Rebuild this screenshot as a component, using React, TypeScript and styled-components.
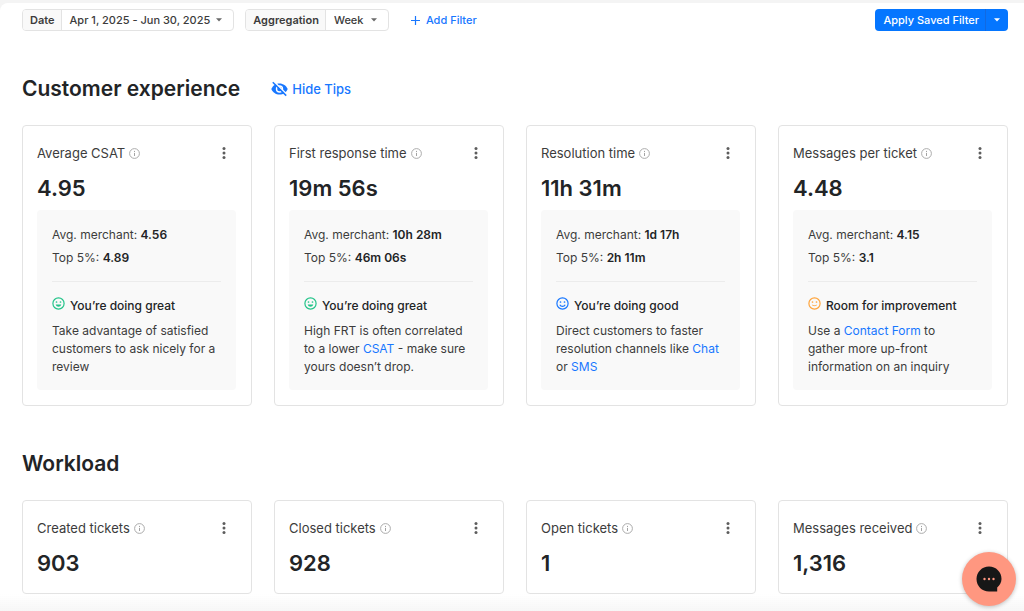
import React from "react";
import styled, { createGlobalStyle } from "styled-components";

const GlobalStyle = createGlobalStyle`
  *, *::before, *::after { box-sizing: border-box; }
  html { background: #f4f4f4; }
  body {
    margin: 0;
    font-family: Inter, "Liberation Sans", sans-serif;
    font-size: 13px;
    line-height: 18px;
    color: #3c3c3c;
  }
  button, select { font: inherit; color: inherit; }
`;

const Page = styled.main`
  margin-top: 3px;
  min-height: calc(100vh - 3px);
  padding: 6px 16px 18px 22px;
  background: #fff;
  border-top-left-radius: 8px;
`;

const Toolbar = styled.div`
  display: flex;
  align-items: center;
  gap: 11px;
  font-size: 11px;
  font-weight: 500;
  line-height: 20px;
`;

const FilterGroup = styled.div`
  display: flex;
  height: 22px;
  border: 1px solid #e3e3e3;
  border-radius: 4px;
  background: #fff;
  overflow: hidden;
`;

const FilterName = styled.label`
  padding: 0 6px 0 7px;
  border-right: 1px solid #e3e3e3;
  background: #f9f9f9;
  font-weight: 600;
`;

const RangeButton = styled.button`
  display: flex;
  align-items: center;
  gap: 6px;
  padding: 0 11px 0 8px;
  border: 0;
  background: none;
  cursor: pointer;
`;

const SelectWrap = styled.div`
  position: relative;
  display: flex;
  align-items: center;
`;

const Select = styled.select`
  width: 62px;
  height: 20px;
  padding: 0 0 0 8px;
  border: 0;
  background: none;
  appearance: none;
  cursor: pointer;
`;

const SelectCaret = styled.span`
  position: absolute;
  right: 11px;
  display: flex;
  pointer-events: none;
`;

const TextButton = styled.button`
  display: flex;
  align-items: center;
  gap: 6px;
  margin-left: 11px;
  padding: 0;
  border: 0;
  background: none;
  color: #1877ff;
  cursor: pointer;
`;

const TipsButton = styled(TextButton)`
  gap: 4px;
  margin-left: 31px;
  font-weight: 500;
`;

const SplitButton = styled.div`
  display: flex;
  height: 22px;
  margin-left: auto;
  border-radius: 4px;
  background: #0576ff;
  color: #fff;
  overflow: hidden;
`;

const SplitPart = styled.button<{ $caret?: boolean }>`
  display: flex;
  align-items: center;
  padding: ${(p) => (p.$caret ? "0 8px" : "0 6px 0 8px")};
  border: 0;
  border-left: ${(p) => (p.$caret ? "1px solid #1269e0" : "0")};
  background: none;
  cursor: pointer;
`;

const SectionHead = styled.div`
  display: flex;
  align-items: center;
  margin: 44px 0 22px;
`;

const Heading = styled.h2`
  margin: 0;
  color: #222426;
  font-size: 21px;
  font-weight: 600;
  line-height: 28px;
`;

const Grid = styled.div`
  display: grid;
  grid-template-columns: repeat(4, minmax(0, 1fr));
  gap: 22px;
`;

const Card = styled.article`
  padding: 15px 15px 15px 14px;
  border: 1px solid #e3e3e3;
  border-radius: 4px;
`;

const CardHead = styled.header`
  display: flex;
  align-items: center;
  height: 24px;
`;

const CardTitle = styled.h3`
  margin: 0 4px 0 0;
  font-size: 13px;
  font-weight: 400;
`;

const MenuButton = styled.button`
  display: flex;
  align-items: center;
  justify-content: center;
  width: 24px;
  height: 24px;
  margin-left: auto;
  padding: 0;
  border: 0;
  background: none;
  cursor: pointer;
`;

const Value = styled.p`
  margin: 8px 0 0;
  color: #222426;
  font-size: 22px;
  font-weight: 600;
  line-height: 30px;
`;

const Tip = styled.div`
  margin-top: 7px;
  padding: 16px 15px 14px;
  border-radius: 4px;
  background: #f9f9f9;
  font-size: 12px;
`;

const Benchmark = styled.p`
  margin: 0 0 5px;

  strong {
    color: #222426;
    font-weight: 600;
  }
`;

const Divider = styled.hr`
  margin: 14px 0 15px;
  border: 0;
  border-top: 1px solid #ececec;
`;

const Status = styled.h4`
  display: flex;
  align-items: flex-start;
  gap: 5px;
  margin: 0 0 7px;
  color: #222426;
  font-size: 12px;
  font-weight: 500;
  white-space: nowrap;
`;

const Advice = styled.p`
  margin: 0;
`;

const Link = styled.a`
  color: #1877ff;
  text-decoration: none;
`;

const BottomFade = styled.div`
  position: fixed;
  inset: auto 0 0;
  height: 17px;
  background: linear-gradient(rgba(247, 247, 247, 0), #f7f7f7);
  pointer-events: none;
`;

const ChatButton = styled.button`
  position: fixed;
  right: 8px;
  bottom: 5px;
  display: flex;
  align-items: center;
  justify-content: center;
  width: 54px;
  height: 54px;
  padding: 0;
  border: 0;
  border-radius: 50%;
  background: #ff9780;
  box-shadow: 0 1px 4px rgba(0, 0, 0, 0.25);
  cursor: pointer;
`;

const Caret = ({ color = "#6a6a6a" }: { color?: string }) => (
  <svg width="6" height="4" viewBox="0 0 6 4" aria-hidden="true">
    <path d="M0 .3h6L3 3.6z" fill={color} />
  </svg>
);

const PlusIcon = () => (
  <svg width="9" height="9" viewBox="0 0 9 9" aria-hidden="true">
    <path d="M4.5 0v9M0 4.5h9" stroke="currentColor" strokeWidth="1.2" />
  </svg>
);

const HiddenEyeIcon = () => (
  <svg width="17" height="16" viewBox="0 0 17 16" aria-hidden="true">
    <path
      d="M8.5 2.4C12.2 2.4 15.3 4.6 16.7 8C15.3 11.4 12.2 13.6 8.5 13.6S1.7 11.4.3 8C1.7 4.6 4.8 2.4 8.5 2.4z"
      fill="currentColor"
    />
    <circle cx="8.5" cy="8" r="3.7" fill="#fff" />
    <circle cx="8.5" cy="8" r="2.3" fill="currentColor" />
    <path d="M3 .6L16.2 13.8" stroke="#fff" strokeWidth="1.5" />
    <path d="M1.8 1.2L15.2 14.6" stroke="currentColor" strokeWidth="1.5" />
  </svg>
);

const InfoIcon = () => (
  <svg width="11" height="11" viewBox="0 0 11 11" aria-hidden="true">
    <circle cx="5.5" cy="5.5" r="4.9" fill="none" stroke="#a3a3a3" strokeWidth=".9" />
    <path d="M5.5 4.9v3.1M5.5 2.9v1.1" stroke="#a3a3a3" strokeWidth="1" />
  </svg>
);

const DotsIcon = () => (
  <svg width="4" height="12" viewBox="0 0 4 12" fill="#5d5d5d" aria-hidden="true">
    <circle cx="2" cy="1.5" r="1.5" />
    <circle cx="2" cy="6" r="1.5" />
    <circle cx="2" cy="10.5" r="1.5" />
  </svg>
);

type Mood = "great" | "good" | "fair";

const moods: Record<Mood, { color: string; label: string; mouth: React.ReactNode }> = {
  great: {
    color: "#24c48a",
    label: "You’re doing great",
    mouth: <path d="M3.7 7.5h5.6C8.8 9.1 7.8 9.7 6.5 9.7S4.2 9.1 3.7 7.5z" fill="currentColor" />,
  },
  good: {
    color: "#1877ff",
    label: "You’re doing good",
    mouth: (
      <path d="M3.8 7.7C4.3 8.8 5.3 9.4 6.5 9.4S8.7 8.8 9.2 7.7" fill="none" stroke="currentColor" strokeWidth="1.1" />
    ),
  },
  fair: {
    color: "#ffa53d",
    label: "Room for improvement",
    mouth: <path d="M4.3 8.1C5.5 8.8 7.5 8.8 8.7 8.1" fill="none" stroke="currentColor" strokeWidth="1" />,
  },
};

const Face = ({ mood }: { mood: Mood }) => (
  <svg width="13" height="13" viewBox="0 0 13 13" color={moods[mood].color} aria-hidden="true">
    <circle cx="6.5" cy="6.5" r="5.6" fill="none" stroke="currentColor" strokeWidth="1.2" />
    <circle cx="4.5" cy="5" r=".85" fill="currentColor" />
    <circle cx="8.5" cy="5" r=".85" fill="currentColor" />
    {moods[mood].mouth}
  </svg>
);

const ChatIcon = () => (
  <svg width="26" height="26" viewBox="0 0 26 26" aria-hidden="true">
    <path
      d="M13 .5C20 .5 25.5 6 25.5 13C25.5 16.4 23.7 19.3 21.2 21.5V25.5H13C6 25.5.5 20 .5 13S6 .5 13 .5z"
      fill="#171717"
    />
    <g fill="#ff9780">
      <circle cx="8.5" cy="13" r="1.2" />
      <circle cx="13" cy="13" r="1.2" />
      <circle cx="17.5" cy="13" r="1.2" />
    </g>
  </svg>
);

interface Metric {
  title: string;
  value: string;
  tip?: { average: string; top: string; mood: Mood; advice: React.ReactNode };
}

const experience: Metric[] = [
  {
    title: "Average CSAT",
    value: "4.95",
    tip: {
      average: "4.56",
      top: "4.89",
      mood: "great",
      advice: "Take advantage of satisfied customers to ask nicely for a review",
    },
  },
  {
    title: "First response time",
    value: "19m 56s",
    tip: {
      average: "10h 28m",
      top: "46m 06s",
      mood: "great",
      advice: (
        <>
          High FRT is often correlated to a lower <Link href="#csat">CSAT</Link> - make sure yours doesn’t drop.
        </>
      ),
    },
  },
  {
    title: "Resolution time",
    value: "11h 31m",
    tip: {
      average: "1d 17h",
      top: "2h 11m",
      mood: "good",
      advice: (
        <>
          Direct customers to faster resolution channels like <Link href="#chat">Chat</Link> or{" "}
          <Link href="#sms">SMS</Link>
        </>
      ),
    },
  },
  {
    title: "Messages per ticket",
    value: "4.48",
    tip: {
      average: "4.15",
      top: "3.1",
      mood: "fair",
      advice: (
        <>
          Use a <Link href="#contact-form">Contact Form</Link> to
          <br />
          gather more up-front information on an inquiry
        </>
      ),
    },
  },
];

const workload: Metric[] = [
  { title: "Created tickets", value: "903" },
  { title: "Closed tickets", value: "928" },
  { title: "Open tickets", value: "1" },
  { title: "Messages received", value: "1,316" },
];

const MetricCard = ({ title, value, tip }: Metric) => (
  <Card>
    <CardHead>
      <CardTitle>{title}</CardTitle>
      <InfoIcon />
      <MenuButton type="button" aria-label={`${title} options`}>
        <DotsIcon />
      </MenuButton>
    </CardHead>
    <Value>{value}</Value>
    {tip && (
      <Tip>
        <Benchmark>
          Avg. merchant: <strong>{tip.average}</strong>
        </Benchmark>
        <Benchmark>
          Top 5%: <strong>{tip.top}</strong>
        </Benchmark>
        <Divider />
        <Status>
          <Face mood={tip.mood} />
          {moods[tip.mood].label}
        </Status>
        <Advice>{tip.advice}</Advice>
      </Tip>
    )}
  </Card>
);

export default function App() {
  return (
    <>
      <GlobalStyle />
      <Page>
        <Toolbar>
          <FilterGroup>
            <FilterName htmlFor="date-range">Date</FilterName>
            <RangeButton id="date-range" type="button" aria-haspopup="dialog">
              Apr 1, 2025 - Jun 30, 2025
              <Caret />
            </RangeButton>
          </FilterGroup>
          <FilterGroup>
            <FilterName htmlFor="aggregation">Aggregation</FilterName>
            <SelectWrap>
              <Select id="aggregation" defaultValue="Week">
                <option>Day</option>
                <option>Week</option>
                <option>Month</option>
              </Select>
              <SelectCaret>
                <Caret />
              </SelectCaret>
            </SelectWrap>
          </FilterGroup>
          <TextButton type="button">
            <PlusIcon />
            Add Filter
          </TextButton>
          <SplitButton>
            <SplitPart type="button">Apply Saved Filter</SplitPart>
            <SplitPart type="button" $caret aria-label="Choose a saved filter">
              <Caret color="#fff" />
            </SplitPart>
          </SplitButton>
        </Toolbar>

        <section>
          <SectionHead>
            <Heading>Customer experience</Heading>
            <TipsButton type="button">
              <HiddenEyeIcon />
              Hide Tips
            </TipsButton>
          </SectionHead>
          <Grid>
            {experience.map((metric) => (
              <MetricCard key={metric.title} {...metric} />
            ))}
          </Grid>
        </section>

        <section>
          <SectionHead>
            <Heading>Workload</Heading>
          </SectionHead>
          <Grid>
            {workload.map((metric) => (
              <MetricCard key={metric.title} {...metric} />
            ))}
          </Grid>
        </section>
      </Page>
      <BottomFade />
      <ChatButton type="button" aria-label="Open chat">
        <ChatIcon />
      </ChatButton>
    </>
  );
}
